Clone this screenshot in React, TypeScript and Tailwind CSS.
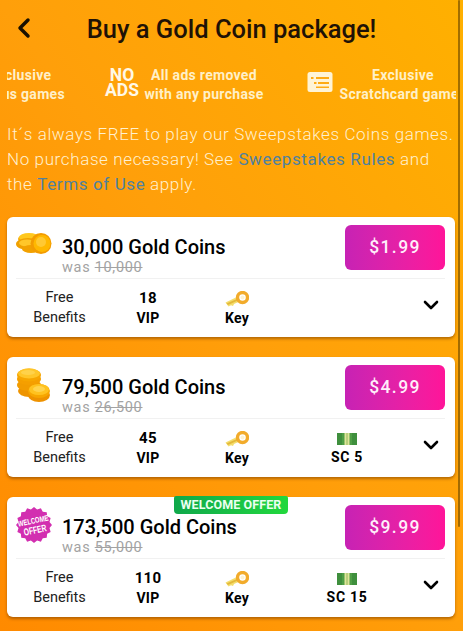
import { ChevronDown, ChevronLeft } from "lucide-react";

function CoinsSmall() {
  return (
    <svg width="36" height="26" viewBox="0 0 36 26" className="mb-[4px] block">
      <ellipse cx="13" cy="9" rx="11" ry="5" fill="#f5a800" />
      <ellipse cx="13" cy="7.5" rx="10" ry="4.5" fill="#ffc81e" />
      <ellipse cx="12" cy="14" rx="12" ry="6" fill="#f0a000" />
      <ellipse cx="11" cy="13" rx="8" ry="3.5" fill="#ffc629" />
      <ellipse cx="15" cy="19" rx="9" ry="4" fill="#f2a100" />
      <circle cx="25" cy="13.5" r="10.5" fill="#f39c00" />
      <circle cx="26" cy="13.5" r="8.5" fill="#ffb800" />
      <circle cx="25" cy="12" r="5" fill="#ffc933" />
    </svg>
  );
}

function CoinsStack() {
  return (
    <svg width="34" height="36" viewBox="0 0 34 36" className="block">
      <ellipse cx="13" cy="24" rx="11" ry="6" fill="#ee9400" />
      <ellipse cx="13" cy="18" rx="12" ry="6" fill="#f29c00" />
      <ellipse cx="13" cy="12" rx="12" ry="6" fill="#f59f00" />
      <ellipse cx="13" cy="8" rx="12" ry="6.5" fill="#f7a600" />
      <ellipse cx="13" cy="6.5" rx="11" ry="5" fill="#ffc629" />
      <ellipse cx="12" cy="5.5" rx="7" ry="2.5" fill="#ffd24a" />
      <ellipse cx="23" cy="28" rx="11" ry="7" fill="#ee9200" />
      <ellipse cx="23" cy="24" rx="11" ry="7" fill="#f7a600" />
      <ellipse cx="23" cy="22.5" rx="10" ry="5.5" fill="#ffc21f" />
      <ellipse cx="23" cy="22" rx="6" ry="3" fill="#ffd34d" />
    </svg>
  );
}

function WelcomeBadge() {
  const points = Array.from({ length: 32 }, (_, i) => {
    const a = (i / 32) * Math.PI * 2;
    const r = i % 2 === 0 ? 18 : 15.8;
    return `${18 + r * Math.cos(a)},${18 + r * Math.sin(a)}`;
  }).join(" ");
  return (
    <svg width="36" height="36" viewBox="0 0 36 36" className="block">
      <polygon points={points} fill="#d22fb0" />
      <g fill="#fff" fontFamily="'Liberation Sans', sans-serif" fontWeight="700" textAnchor="middle" transform="rotate(-12 18 18)">
        <text x="18" y="16.5" fontSize="8" textLength="31" lengthAdjust="spacingAndGlyphs">WELCOME</text>
        <text x="18" y="26.5" fontSize="10" textLength="23" lengthAdjust="spacingAndGlyphs">OFFER</text>
      </g>
    </svg>
  );
}

function KeyIcon() {
  return (
    <svg width="24" height="16" viewBox="0 0 24 16" className="block">
      <path d="M0.5 11.5 L13 5.5 L15.5 10 L9 13 L8 15 L6 14.2 L3.5 15.5 Z" fill="#f4dd6c" />
      <path d="M1.5 12.5 L13 7.5 L14 9 L3 14 Z" fill="#e3b93c" />
      <circle cx="17.5" cy="6.5" r="5" fill="none" stroke="#f2ab2b" strokeWidth="3.4" />
      <circle cx="17.5" cy="6.5" r="2" fill="#fdf3d2" />
    </svg>
  );
}

function MoneyIcon() {
  return (
    <svg width="20" height="14" viewBox="0 0 20 14" className="block">
      <rect x="0" y="1" width="20" height="12" fill="#4f9e45" />
      <rect x="0" y="1" width="5" height="12" fill="#3f8f3d" />
      <rect x="15" y="1" width="5" height="12" fill="#3f8f3d" />
      <rect x="7.5" y="1" width="5" height="12" fill="#dfe59a" />
      <rect x="9" y="1" width="2" height="12" fill="#b9cf7c" />
    </svg>
  );
}

function Scratchcard() {
  return (
    <svg width="26" height="20" viewBox="0 0 26 20" className="block">
      <rect x="0.5" y="0" width="25" height="20" rx="2.5" fill="#fff4d6" />
      <rect x="4" y="5" width="2.5" height="2" fill="#ffab14" />
      <rect x="9" y="5" width="13" height="2" fill="#ffab14" />
      <rect x="7" y="10" width="2.5" height="2" fill="#ffab14" />
      <rect x="11" y="10" width="11" height="2" fill="#ffab14" />
      <rect x="9" y="14.5" width="13" height="1.5" fill="#ffab14" />
    </svg>
  );
}

type Pack = {
  coins: string;
  was: string;
  price: string;
  vip: string;
  sc?: string;
  icon: React.ReactNode;
  welcome?: boolean;
};

const packs: Pack[] = [
  { coins: "30,000", was: "10,000", price: "$1.99", vip: "18", icon: <CoinsSmall /> },
  { coins: "79,500", was: "26,500", price: "$4.99", vip: "45", sc: "SC 5", icon: <CoinsStack /> },
  { coins: "173,500", was: "55,000", price: "$9.99", vip: "110", sc: "SC 15", icon: <WelcomeBadge />, welcome: true },
];

function PackCard({ pack }: { pack: Pack }) {
  return (
    <div className="relative h-[120px] rounded-md bg-white pl-[9px] pr-[10px] pt-2 shadow-[0_2px_3px_rgba(120,60,0,0.55)]">
      {pack.welcome && (
        <div className="absolute left-[167px] top-[-1px] flex h-[18px] w-[114px] items-center justify-center rounded-b-[4px] rounded-t-[2px] bg-gradient-to-r from-[#0fa84a] to-[#22d83c] text-[12.5px] font-bold tracking-[0.1px] text-[#eafff0]">
          WELCOME OFFER
        </div>
      )}
      <div className="flex h-[45px] items-start">
        <div className="flex h-[36px] w-[46px] shrink-0 items-center pt-[3px]">{pack.icon}</div>
        <div className="pt-[10px]">
          <div className="text-[20px] font-medium leading-[24px] text-black">{pack.coins} Gold Coins</div>
          <div className="mt-[1px] text-[14.5px] leading-[16px] tracking-[0.7px] text-[#a3a3a3]">
            was <span className="line-through">{pack.was}</span>
          </div>
        </div>
        <button className="ml-auto h-[45px] w-[100px] shrink-0 rounded-md bg-gradient-to-r from-[#c722b4] to-[#ff1499] text-[17.5px] font-medium tracking-[1.4px] text-[#ffeefa]">
          {pack.price}
        </button>
      </div>
      <div className="mt-2 flex h-[58px] items-center border-t border-[#f1f1f1] text-center text-[14px] leading-[20px] text-black">
        <div className="w-[87px] text-[14.5px] text-[#222]">
          Free
          <br />
          Benefits
        </div>
        <div className="w-[90px] font-bold">
          <div className="text-[15px] tracking-[0.3px]">{pack.vip}</div>
          <div className="text-[14px] tracking-[0.3px]">VIP</div>
        </div>
        <div className="flex w-[88px] flex-col items-center pt-[3px] font-bold">
          <KeyIcon />
          <div className="mt-[1px] tracking-[0.2px]">Key</div>
        </div>
        <div className="flex w-[132px] flex-col items-center pt-[3px] font-bold">
          {pack.sc && (
            <>
              <MoneyIcon />
              <div className="mt-[1px] tracking-[0.7px]">{pack.sc}</div>
            </>
          )}
        </div>
        <ChevronDown size={24} strokeWidth={2.6} className="mb-[5px] ml-[6px] text-black" />
      </div>
    </div>
  );
}

export default function App() {
  return (
    <div
      className="relative h-[631px] w-[463px] overflow-hidden bg-gradient-to-bl from-[#ffb000] via-[#ff9f0a] to-[#ff8a00] px-[7px] text-black"
      style={{ fontFamily: "Roboto, sans-serif" }}
    >
      <header className="relative flex h-[58px] items-center justify-center">
        <ChevronLeft size={32} strokeWidth={2.6} className="absolute left-[1px] top-[12px] text-[#1a1000]" />
        <h1 className="text-[25.5px] font-medium leading-[28px] text-[#1f1206]">Buy a Gold Coin package!</h1>
      </header>

      <div className="flex h-[46px] overflow-hidden text-center text-[14px] font-bold leading-[18.5px] tracking-[0.3px] text-[#fff0c8]">
        <div className="ml-[-34.5px] w-[96px] shrink-0 whitespace-nowrap pt-[8px]">
          Exclusive
          <br />
          Bonus games
        </div>
        <div className="ml-[35.5px] w-[36px] shrink-0 pt-[10px] text-[17.5px] font-bold leading-[15px] tracking-normal text-[#fff8e6]">
          NO
          <br />
          ADS
        </div>
        <div className="ml-[3px] w-[122px] shrink-0 whitespace-nowrap pt-[8px]">
          All ads removed
          <br />
          with any purchase
        </div>
        <div className="ml-[42px] shrink-0 pt-[14px]">
          <Scratchcard />
        </div>
        <div className="ml-[5px] w-[130px] shrink-0 whitespace-nowrap pt-[8px]">
          Exclusive
          <br />
          Scratchcard games
        </div>
      </div>

      <p className="mt-[18px] whitespace-nowrap text-[17px] font-light leading-[25px] tracking-[0.62px] text-[#fff0cf]">
        It´s always FREE to play our Sweepstakes Coins games.
        <br />
        No purchase necessary! See <span className="font-normal text-[#4f81a0]">Sweepstakes Rules</span> and
        <br />
        the <span className="font-normal text-[#4f81a0]">Terms of Use</span> apply.
      </p>

      <div className="mt-[20px] flex w-[448px] flex-col gap-5">
        {packs.map((p) => (
          <PackCard key={p.coins} pack={p} />
        ))}
      </div>

      <div className="absolute right-[3px] top-0 h-[527px] w-[2px] rounded-full bg-[#7a5200]/70" />
    </div>
  );
}
